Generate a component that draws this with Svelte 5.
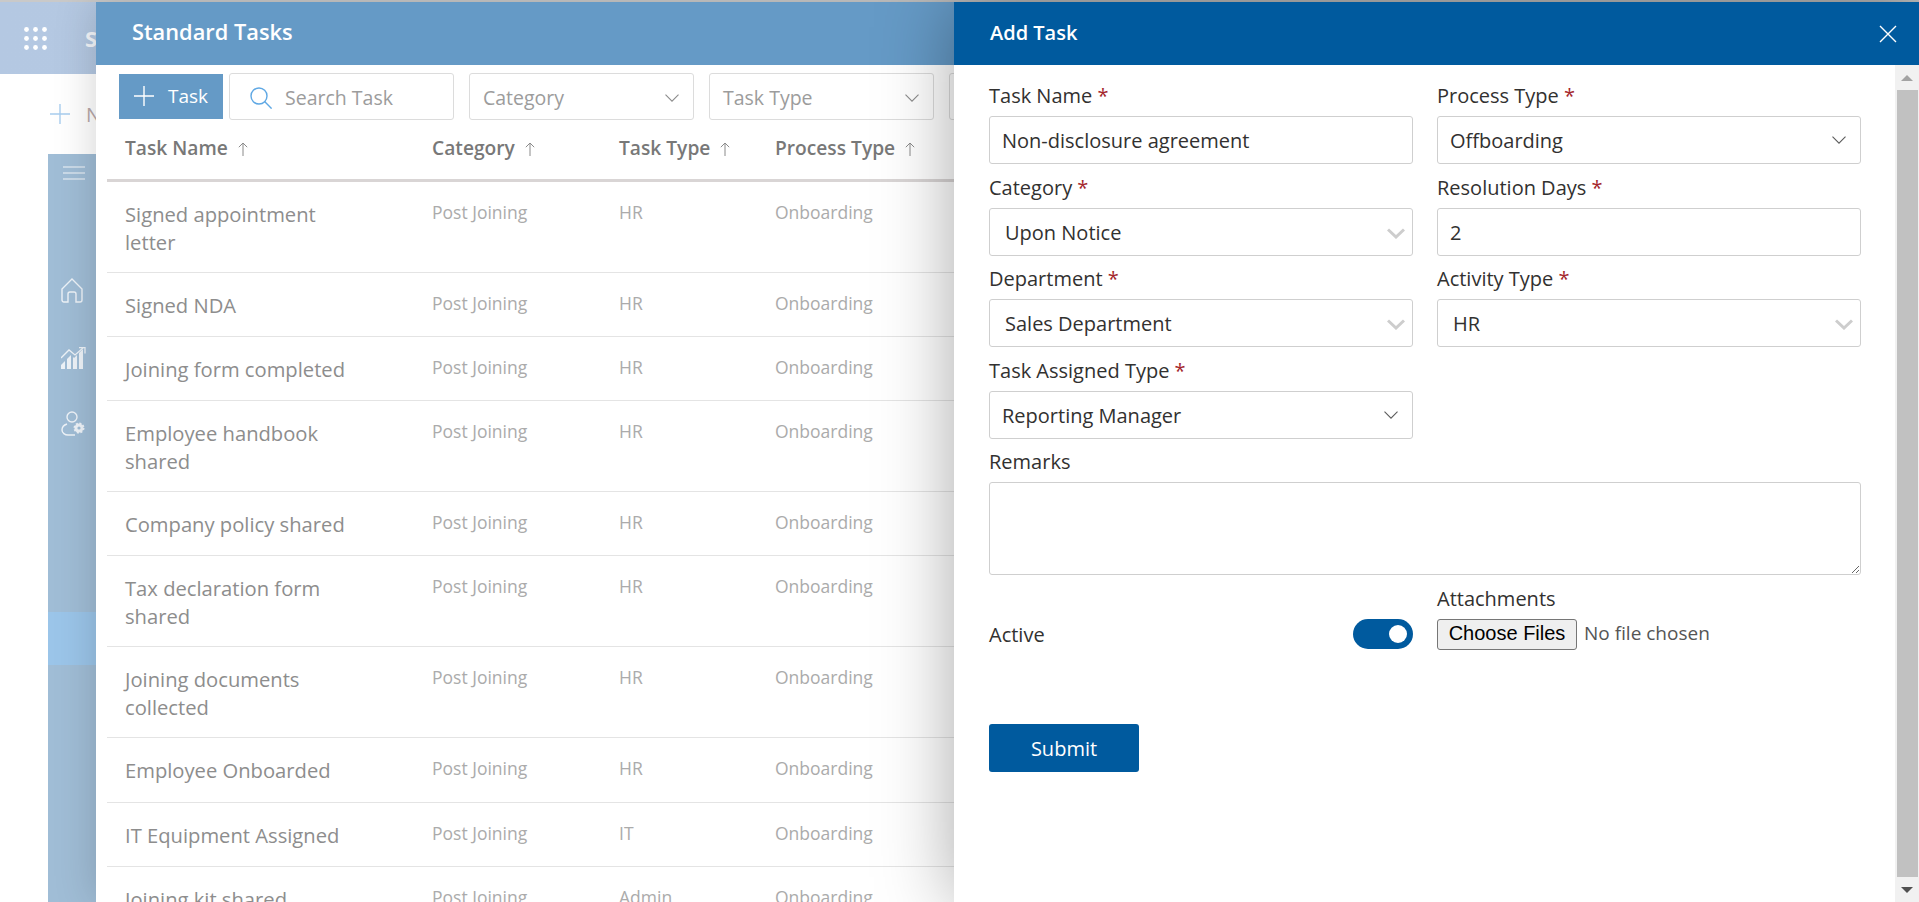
<script>
  const tasks = [
    { name: 'Signed appointment letter', category: 'Post Joining', type: 'HR' },
    { name: 'Signed NDA', category: 'Post Joining', type: 'HR' },
    { name: 'Joining form completed', category: 'Post Joining', type: 'HR' },
    { name: 'Employee handbook shared', category: 'Post Joining', type: 'HR' },
    { name: 'Company policy shared', category: 'Post Joining', type: 'HR' },
    { name: 'Tax declaration form shared', category: 'Post Joining', type: 'HR' },
    { name: 'Joining documents collected', category: 'Post Joining', type: 'HR' },
    { name: 'Employee Onboarded', category: 'Post Joining', type: 'HR' },
    { name: 'IT Equipment Assigned', category: 'Post Joining', type: 'IT' },
    { name: 'Joining kit shared', category: 'Post Joining', type: 'Admin' }
  ];

  const columns = ['Task Name', 'Category', 'Task Type', 'Process Type'];
</script>

{#snippet thinChevron()}
  <svg class="chevron" width="14" height="8" viewBox="0 0 14 8" fill="none" stroke="currentColor" stroke-width="1.1"><path d="M.5.7 7 7.2 13.5.7" /></svg>
{/snippet}

{#snippet heavyChevron()}
  <svg class="chevron heavy" width="18" height="11" viewBox="0 0 18 11" fill="none" stroke="currentColor" stroke-width="3"><path d="M1 1.5 9 9l8-7.5" /></svg>
{/snippet}

{#snippet arrowUp()}
  <svg class="sort" width="10" height="14" viewBox="0 0 10 14" fill="none" stroke="currentColor" stroke-width="1"><path d="M5 14V1M.8 5.2 5 1l4.2 4.2" /></svg>
{/snippet}

<div class="strip"></div>
<div class="page">
  <div class="app-header">
    <svg width="23" height="23" viewBox="0 0 23 23" fill="#fff">
      {#each [2.5, 11.5, 20.5] as y}
        {#each [2.5, 11.5, 20.5] as x}
          <circle cx={x} cy={y} r="2.4" />
        {/each}
      {/each}
    </svg>
    <span class="app-title">S</span>
  </div>
  <div class="new-row">
    <svg width="20" height="20" viewBox="0 0 20 20" stroke="#a8cdee" stroke-width="1.4"><path d="M10 0v20M0 10h20" /></svg>
    <span>N</span>
  </div>
  <aside class="sidebar">
    <svg class="burger" width="22" height="14" viewBox="0 0 22 14" stroke="#f4f7fa" stroke-width="1.2"><path d="M0 1h22M0 7h22M0 13h22" /></svg>
    <svg class="nav home" width="22" height="25" viewBox="0 0 22 25" fill="none" stroke="#eef3f8" stroke-width="1.4"><path d="M1 11 11 1l10 10v11a2 2 0 0 1-2 2h-4v-8a2 2 0 0 0-2-2H9a2 2 0 0 0-2 2v8H3a2 2 0 0 1-2-2z" /></svg>
    <svg class="nav chart" width="25" height="22" viewBox="0 0 25 22" fill="#eef3f8"><path d="M0 22v-4l4-4v8zM6 22V12l4-4v14zM12 22V10l1 1 3-3v14zM18 22V6l4-4v20z" /><path d="M0 11 8 3l6 5 8-7M18 .6h6v6" fill="none" stroke="#eef3f8" stroke-width="1.3" /></svg>
    <svg class="nav gear" width="25" height="25" viewBox="0 0 25 25" fill="none" stroke="#eef3f8" stroke-width="1.4"><circle cx="11" cy="6" r="5" /><path d="M6 13c-3 1-5 3-5 6 0 3 3 5 6 5h7" /><circle cx="18" cy="17" r="4.5" fill="#eef3f8" stroke-width="2" stroke-dasharray="2 1.5" /><circle cx="18" cy="17" r="1.6" fill="#a0bdd6" stroke="none" /></svg>
    <div class="side-active"></div>
  </aside>
</div>

<section class="tasks-panel">
  <header class="tasks-header">Standard Tasks</header>
  <div class="toolbar">
    <button class="add-btn">
      <svg width="20" height="20" viewBox="0 0 20 20" stroke="#fff" stroke-width="1.4"><path d="M10 0v20M0 10h20" /></svg>
      Task
    </button>
    <div class="filter search">
      <svg width="22" height="22" viewBox="0 0 22 22" fill="none" stroke="#5fa8e4" stroke-width="1.4"><circle cx="9" cy="9" r="8" /><path d="m14.6 14.6 7 7" /></svg>
      <span>Search Task</span>
    </div>
    <div class="filter"><span>Category</span>{@render thinChevron()}</div>
    <div class="filter"><span>Task Type</span>{@render thinChevron()}</div>
    <div class="filter"></div>
  </div>
  <table class="tasks">
    <colgroup>
      <col style="width: 308px" />
      <col style="width: 187px" />
      <col style="width: 156px" />
      <col style="width: 196px" />
    </colgroup>
    <thead>
      <tr>
        {#each columns as col}
          <th>{col} {@render arrowUp()}</th>
        {/each}
      </tr>
    </thead>
    <tbody>
      {#each tasks as task}
        <tr>
          <td class="name"><div>{task.name}</div></td>
          <td>{task.category}</td>
          <td>{task.type}</td>
          <td>Onboarding</td>
        </tr>
      {/each}
    </tbody>
  </table>
</section>

<section class="add-panel">
  <header class="add-header">
    <span>Add Task</span>
    <svg width="18" height="18" viewBox="0 0 18 18" stroke="#fff" stroke-width="1.4"><path d="m1 1 16 16M17 1 1 17" /></svg>
  </header>
  <div class="add-body">
    <form class="form">
      <div class="field">
        <label for="task-name">Task Name <em>*</em></label>
        <input id="task-name" value="Non-disclosure agreement" />
      </div>
      <div class="field">
        <label for="process-type">Process Type <em>*</em></label>
        <div class="select-wrap">
          <select id="process-type"><option>Offboarding</option></select>
          {@render thinChevron()}
        </div>
      </div>
      <div class="field">
        <label for="category">Category <em>*</em></label>
        <div class="select-wrap">
          <select id="category" class="pad"><option>Upon Notice</option></select>
          {@render heavyChevron()}
        </div>
      </div>
      <div class="field">
        <label for="days">Resolution Days <em>*</em></label>
        <input id="days" value="2" />
      </div>
      <div class="field">
        <label for="department">Department <em>*</em></label>
        <div class="select-wrap">
          <select id="department" class="pad"><option>Sales Department</option></select>
          {@render heavyChevron()}
        </div>
      </div>
      <div class="field">
        <label for="activity">Activity Type <em>*</em></label>
        <div class="select-wrap">
          <select id="activity" class="pad"><option>HR</option></select>
          {@render heavyChevron()}
        </div>
      </div>
      <div class="field">
        <label for="assigned">Task Assigned Type <em>*</em></label>
        <div class="select-wrap">
          <select id="assigned"><option>Reporting Manager</option></select>
          {@render thinChevron()}
        </div>
      </div>
      <div class="field remarks">
        <label for="remarks">Remarks</label>
        <textarea id="remarks"></textarea>
      </div>
      <div class="active-row">
        <span class="label">Active</span>
        <span class="toggle"><span class="knob"></span></span>
      </div>
      <div class="field">
        <label for="files">Attachments</label>
        <input id="files" class="file" type="file" multiple />
      </div>
      <div class="actions">
        <button type="button" class="submit">Submit</button>
      </div>
    </form>
    <div class="scrollbar">
      <div class="scroll-btn"><span class="tri up"></span></div>
      <div class="thumb"></div>
      <div class="scroll-btn"><span class="tri down"></span></div>
    </div>
  </div>
</section>

<style>
  :global(body) {
    margin: 0;
    height: 902px;
    overflow: hidden;
    background: #fff;
    font-family: "Open Sans", "Noto Sans", sans-serif;
  }

  .strip {
    height: 2px;
    background: #c9c9c9;
  }

  .page {
    display: flex;
    flex-direction: column;
    height: 900px;
  }

  .app-header {
    height: 72px;
    flex-shrink: 0;
    display: flex;
    align-items: center;
    gap: 38px;
    padding-left: 24px;
    background: linear-gradient(100deg, #b4c8e2, #b9cde4);
  }

  .app-title {
    color: #f4f7fb;
    font-size: 22px;
    font-weight: 700;
  }

  .new-row {
    height: 80px;
    flex-shrink: 0;
    display: flex;
    align-items: center;
    gap: 16px;
    padding-left: 50px;
    box-sizing: border-box;
    color: #b9a9a9;
    font-size: 20px;
  }

  .sidebar {
    flex: 1;
    margin-left: 48px;
    display: flex;
    flex-direction: column;
    background: #a0bdd6;
    position: relative;
  }

  .burger {
    margin: 12px 0 0 15px;
  }

  .nav {
    margin-left: 13px;
  }

  .nav.home {
    margin-top: 98px;
  }

  .nav.chart {
    margin-top: 44px;
  }

  .nav.gear {
    margin-top: 42px;
  }

  .side-active {
    position: absolute;
    top: 458px;
    left: 0;
    right: 0;
    height: 53px;
    background: #9bc5e9;
  }

  .tasks-panel {
    position: absolute;
    top: 2px;
    left: 96px;
    right: 0;
    bottom: 0;
    overflow: hidden;
    background: #fff;
    box-shadow: 0 0 40px rgba(0, 0, 0, 0.18);
  }

  .tasks-header {
    height: 63px;
    box-sizing: border-box;
    padding: 0 0 4px 36px;
    display: flex;
    align-items: center;
    background: #659ac6;
    color: #fff;
    font-size: 21.8px;
    font-weight: 600;
  }

  .toolbar {
    display: flex;
    align-items: center;
    gap: 15px;
    height: 47px;
    margin-top: 8px;
    padding-left: 23px;
  }

  .add-btn {
    width: 104px;
    height: 45px;
    flex-shrink: 0;
    margin-right: -9px;
    display: flex;
    align-items: center;
    justify-content: center;
    gap: 14px;
    border: 0;
    padding: 0 0 1px;
    background: #659ac6;
    color: #fff;
    font: inherit;
    font-size: 19px;
  }

  .filter {
    width: 225px;
    height: 47px;
    flex-shrink: 0;
    box-sizing: border-box;
    display: flex;
    align-items: center;
    justify-content: space-between;
    padding: 2px 14px 0 13px;
    border: 1px solid #dcdcdc;
    border-radius: 3px;
    color: #9c9c9c;
    font-size: 19.5px;
    position: relative;
  }

  .filter .chevron {
    color: #8c8c8c;
  }

  .filter.search {
    justify-content: flex-start;
    gap: 13px;
    padding-left: 20px;
  }

  .tasks {
    margin: 0 0 0 11px;
    border-collapse: collapse;
    table-layout: fixed;
    width: 847px;
  }

  .tasks th {
    height: 60px;
    padding: 0 0 3px 17px;
    box-sizing: border-box;
    border-bottom: 3px solid #d9d5d5;
    text-align: left;
    color: #787878;
    font-size: 19.2px;
    font-weight: 600;
    white-space: nowrap;
  }

  .tasks th:first-child {
    padding-left: 18px;
  }

  .sort {
    margin-left: 5px;
    color: #8a8a8a;
    vertical-align: -1px;
  }

  .tasks td {
    padding: 16px 0 0 17px;
    height: 64.3px;
    box-sizing: border-box;
    border-bottom: 1px solid #e4e4e4;
    vertical-align: top;
    color: #ababab;
    font-size: 17.5px;
    line-height: 28px;
  }

  .tasks td.name {
    padding: 18px 0 16px 18px;
    color: #8d8d8d;
    font-size: 20.2px;
  }

  .tasks td.name div {
    max-width: 225px;
  }

  .add-panel {
    position: absolute;
    top: 2px;
    left: 954px;
    right: 0;
    bottom: 0;
    display: flex;
    flex-direction: column;
    background: #fff;
    box-shadow: 0 0 70px rgba(0, 0, 0, 0.34);
  }

  .add-header {
    height: 63px;
    flex-shrink: 0;
    box-sizing: border-box;
    display: flex;
    align-items: center;
    justify-content: space-between;
    padding: 0 22px 0 36px;
    background: #005a9e;
    color: #fff;
    font-size: 20px;
    font-weight: 600;
  }

  .add-header span {
    margin-bottom: 3px;
  }

  .add-body {
    flex: 1;
    display: flex;
    min-height: 0;
  }

  .form {
    flex: 1;
    display: grid;
    grid-template-columns: 424px 424px;
    column-gap: 24px;
    row-gap: 8.5px;
    align-content: start;
    padding: 16px 0 0 35px;
  }

  .field {
    display: flex;
    flex-direction: column;
    min-width: 0;
  }

  .field.remarks {
    grid-column: 1 / 3;
  }

  label,
  .label {
    height: 28px;
    margin-bottom: 7px;
    color: #323130;
    font-size: 20px;
    font-weight: 500;
    line-height: 30px;
  }

  label em {
    font-style: normal;
    color: #a4262c;
  }

  input,
  select,
  textarea {
    width: 100%;
    box-sizing: border-box;
    height: 48px;
    margin: 0;
    padding: 1px 12px 0;
    border: 1px solid #cfcfcf;
    border-radius: 3px;
    background: #fff;
    color: #323130;
    font: inherit;
    font-size: 20px;
    outline: none;
  }

  select {
    appearance: none;
    display: block;
  }

  select.pad {
    padding-left: 15px;
  }

  .select-wrap {
    position: relative;
  }

  .select-wrap .chevron {
    position: absolute;
    right: 15px;
    top: 20px;
    color: #5c5c5c;
    pointer-events: none;
  }

  .select-wrap .chevron.heavy {
    right: 8px;
    color: #cdcdcd;
  }

  textarea {
    display: block;
    height: 93px;
    padding: 8px 12px;
  }

  .active-row {
    display: flex;
    align-items: center;
    justify-content: space-between;
    align-self: end;
    height: 31px;
  }

  .active-row .label {
    margin: 0;
  }

  .toggle {
    width: 60px;
    height: 30px;
    box-sizing: border-box;
    display: flex;
    align-items: center;
    justify-content: flex-end;
    padding-right: 6px;
    border-radius: 15px;
    background: #005a9e;
  }

  .knob {
    width: 18px;
    height: 18px;
    border-radius: 50%;
    background: #fff;
  }

  input.file {
    height: auto;
    padding: 0;
    border: 0;
    border-radius: 0;
    overflow: visible;
    color: #555;
    font-size: 19px;
    line-height: normal;
  }

  input.file::file-selector-button {
    width: 140px;
    height: 31px;
    margin-right: 7px;
    padding: 0 0 2px;
    border: 1px solid #767676;
    border-radius: 3px;
    background: #efefef;
    color: #000;
    font-family: "Liberation Sans", sans-serif;
    font-size: 20px;
  }

  .actions {
    grid-column: 1 / 3;
    margin-top: 66px;
  }

  .submit {
    width: 150px;
    height: 48px;
    border: 0;
    border-radius: 3px;
    background: #005a9e;
    color: #fff;
    font: inherit;
    font-size: 20px;
    font-weight: 500;
  }

  .scrollbar {
    width: 24px;
    flex-shrink: 0;
    display: flex;
    flex-direction: column;
    align-items: center;
    background: #f1f1f1;
  }

  .scroll-btn {
    height: 25px;
    width: 100%;
    flex-shrink: 0;
    display: flex;
    align-items: center;
    justify-content: center;
  }

  .thumb {
    flex: 1;
    width: 21px;
    margin-left: 1px;
    background: #c1c1c1;
  }

  .tri {
    width: 0;
    height: 0;
    border-left: 6px solid transparent;
    border-right: 6px solid transparent;
  }

  .tri.up {
    border-bottom: 6px solid #a3a3a3;
  }

  .tri.down {
    border-top: 6px solid #505050;
  }
</style>
